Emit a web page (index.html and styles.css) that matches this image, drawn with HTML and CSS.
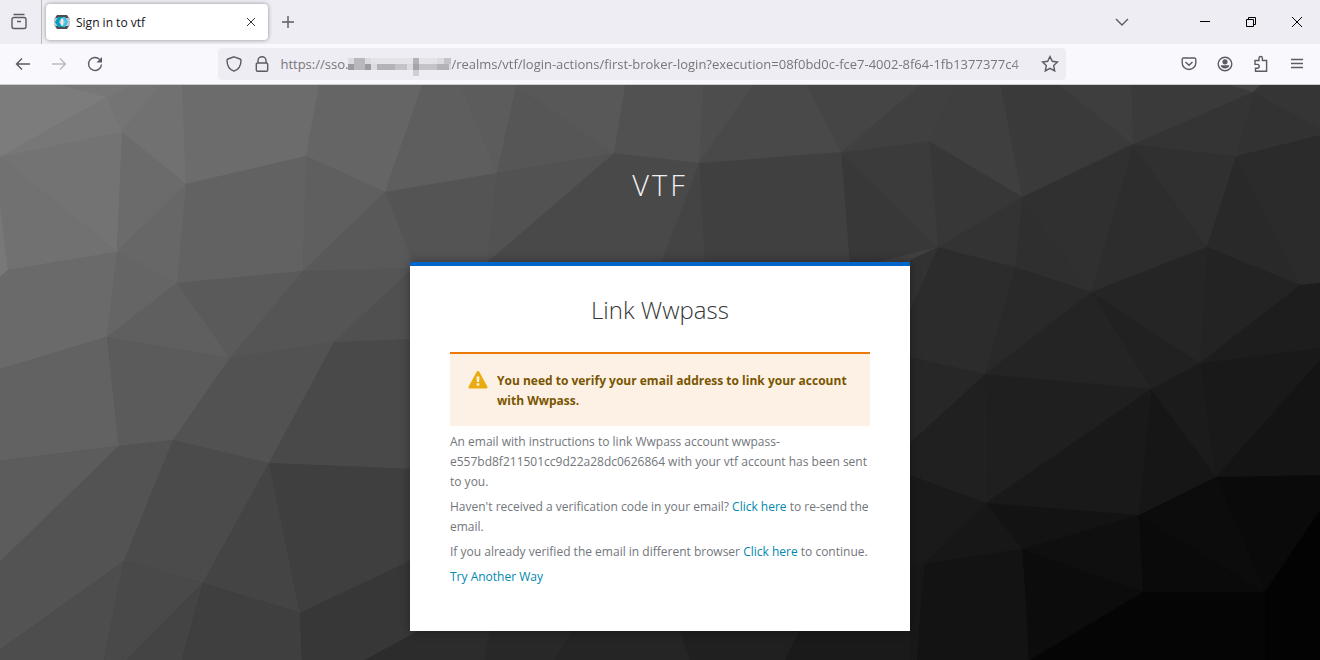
FILE: index.html
```html
<!DOCTYPE html>
<html lang="en">
  <head>
    <meta charset="UTF-8" />
    <meta name="viewport" content="width=device-width, initial-scale=1.0" />
    <link rel="stylesheet" href="styles.css">
    <title>Sign in to vtf</title>
  </head>
  <body>
    <!-- tab bar -->
    <div class="tab-bar">
      <button class="view-btn" aria-label="Recent browsing">
        <svg width="18" height="18" viewBox="0 0 18 18"><path d="M3.500 1.500h11M4 4.500h10a2 2 0 0 1 2 2v7a2 2 0 0 1-2 2H4a2 2 0 0 1-2-2v-7a2 2 0 0 1 2-2zM7 8.500h4" /></svg>
      </button>
      <div class="tab">
        <svg class="favicon" width="16" height="16" viewBox="0 0 16 16">
          <path d="M3 1h10l2 3v8l-2 3H3l-2-3V4z" fill="#4d4d4d" />
          <path d="M0 4h16v8H0z" fill="#c4c8cc" />
          <path d="M4 3h4L5 8l3 5H4L1 8z" fill="#00a0c6" />
          <path d="M8 3h3l3 5-3 5H8l3-5z" fill="#33c6e9" />
          <path d="M7 5h2v6H7z" fill="#e6eef0" />
        </svg>
        <span class="tab-title">Sign in to vtf</span>
        <button class="tab-close" aria-label="Close tab">
          <svg width="10" height="10" viewBox="0 0 10 10"><path d="M1 1l8 8M9 1L1 9" /></svg>
        </button>
      </div>
      <button class="new-tab" aria-label="New tab">
        <svg width="14" height="14" viewBox="0 0 14 14"><path d="M7 1v12M1 7h12" /></svg>
      </button>
      <div class="window-buttons">
        <button class="all-tabs" aria-label="List all tabs">
          <svg width="14" height="8" viewBox="0 0 14 8"><path d="M1 1l6 6 6-6" /></svg>
        </button>
        <button aria-label="Minimize">
          <svg width="10" height="10" viewBox="0 0 10 10"><path d="M0 4.500h10" /></svg>
        </button>
        <button aria-label="Restore">
          <svg width="10" height="10" viewBox="0 0 10 10"><path d="M.5 2.500h7v7h-7zM2.500 2.500v-2h7v7h-2" /></svg>
        </button>
        <button aria-label="Close">
          <svg width="10" height="10" viewBox="0 0 10 10"><path d="M0 0l10 10M10 0L0 10" /></svg>
        </button>
      </div>
    </div>

    <!-- navigation bar -->
    <div class="nav-bar">
      <button aria-label="Back">
        <svg width="16" height="16" viewBox="0 0 16 16"><path d="M15 8H2M7 2.500L1.500 8 7 13.500" /></svg>
      </button>
      <button aria-label="Forward" disabled>
        <svg width="16" height="16" viewBox="0 0 16 16"><path d="M1 8h13M9 2.500L14.500 8 9 13.500" /></svg>
      </button>
      <button aria-label="Reload">
        <svg width="16" height="16" viewBox="0 0 16 16"><path d="M14.500 8.500A6.500 6.500 0 1 1 12.800 3.600" /><path class="solid" d="M15 1v5.500H9.500z" /></svg>
      </button>
      <div class="spacer"></div>
      <div class="url-bar">
        <button aria-label="Tracking protection">
          <svg width="16" height="16" viewBox="0 0 16 16"><path d="M8 .8l6 2.200c.7.3 1 .7 1 1.400C15 9.500 12.500 13.500 8 15.200 3.500 13.500 1 9.500 1 4.400c0-.7.3-1.100 1-1.400z" /></svg>
        </button>
        <button aria-label="Site information">
          <svg width="14" height="16" viewBox="0 0 14 16"><path d="M3 7V4.500a4 3.800 0 0 1 8 0V7M2.500 7h9a1.200 1.200 0 0 1 1.200 1.200v5.800a1.200 1.200 0 0 1-1.200 1.200h-9A1.200 1.200 0 0 1 1.300 14V8.200A1.200 1.200 0 0 1 2.500 7z" /></svg>
        </button>
        <label class="url-host" for="url">https://sso.</label>
        <svg class="mosaic" width="103" height="18" viewBox="0 0 103 18">
          <path d="M0 0h103v12H0z" fill="#dcdbe0" />
          <path d="M0 6h6v6H0zM17 6h6v6h-6z" fill="#9c9b9f" />
          <path d="M6 0h5v6H6zM11 0h6v6h-6zM6 6h11v6H6z" fill="#b9b8bd" />
          <path d="M23 0h42v6H23zM71 0h18v6H71z" fill="#e4e3e8" />
          <path d="M29 6h18v6H29zM89 6h12v6H89zM65 0h6v6h-6z" fill="#b3b2b7" />
          <path d="M47 6h12v6H47zM71 6h18v6H71zM96 0h7v6h-7z" fill="#c4c3c8" />
          <path d="M65 6h6v6h-6z" fill="#a5a4a9" />
          <path d="M65 12h6v6h-6z" fill="#d0cfd4" />
        </svg>
        <input type="text" id="url" value="/realms/vtf/login-actions/first-broker-login?execution=08f0bd0c-fce7-4002-8f64-1fb1377377c4" />
        <button aria-label="Bookmark this page">
          <svg width="18" height="18" viewBox="0 0 18 18"><path d="M9 1.500l2.300 4.800 5.200.7-3.800 3.600 1 5.300L9 13.300l-4.700 2.600 1-5.300L1.500 7l5.200-.7z" /></svg>
        </button>
      </div>
      <div class="spacer"></div>
      <button aria-label="Save to Pocket">
        <svg width="16" height="16" viewBox="0 0 16 16"><path d="M2.500 2h11a1.300 1.300 0 0 1 1.300 1.300V7a6.800 6.500 0 0 1-13.600 0V3.300A1.300 1.300 0 0 1 2.500 2zM4.500 6L8 9.300 11.500 6" /></svg>
      </button>
      <button aria-label="Account">
        <svg width="16" height="16" viewBox="0 0 16 16"><circle cx="8" cy="8" r="6.800" /><circle class="solid" cx="8" cy="5.800" r="2.600" /><path class="solid" d="M3.600 9.300h8.800a4.500 4 0 0 1-8.800 0z" /></svg>
      </button>
      <button aria-label="Extensions">
        <svg width="16" height="18" viewBox="0 0 16 18"><path d="M2 5.500h4V3.200a1.700 1.700 0 0 1 3.400 0v2.300h4.200v10.700H2.500v-3h1.800a1.800 1.800 0 0 0 0-3.800H2z" /></svg>
      </button>
      <button aria-label="Open menu">
        <svg width="14" height="12" viewBox="0 0 14 12"><path d="M1 1.500h12M1 5.500h12M1 9.500h12" /></svg>
      </button>
    </div>

    <!-- page -->
    <div class="login-page">
      <svg class="backdrop" viewBox="0 85 1320 575" preserveAspectRatio="xMidYMid slice" aria-hidden="true">
        <defs>
          <linearGradient id="base" x1="0" y1="0" x2="1" y2="1">
            <stop offset="0" stop-color="#7c7c7c" />
            <stop offset="0.5" stop-color="#3f3f3f" />
            <stop offset="1" stop-color="#000" />
          </linearGradient>
        </defs>
        <path d="M0 85H1320V660H0z" fill="url(#base)" />
        <!-- left side -->
        <path d="M0 85H60L107 97 0 157z" fill="#7c7c7c" />
        <path d="M60 85H135L107 97z" fill="#777" />
        <path d="M107 97L122 132 0 157z" fill="#777" />
        <path d="M135 85H160L122 132 107 97z" fill="#747474" />
        <path d="M160 85H182L186 184 122 132z" fill="#717171" />
        <path d="M0 157L122 132 117 252z" fill="#737373" />
        <path d="M0 157L117 252 8 270 0 205z" fill="#717171" />
        <path d="M0 205L8 270 0 277z" fill="#787878" />
        <path d="M122 132L186 184 117 252z" fill="#6b6b6b" />
        <path d="M182 85H319L306 156 186 184z" fill="#6c6c6c" />
        <path d="M319 85H422L385 192 306 156z" fill="#656565" />
        <path d="M186 184L306 156 303 271 177 283z" fill="#626262" />
        <path d="M306 156L385 192 303 271z" fill="#5f5f5f" />
        <path d="M117 252L186 184 177 283z" fill="#676767" />
        <path d="M117 252L177 283 107 337z" fill="#656565" />
        <path d="M8 270L117 252 107 337 0 369V277z" fill="#6a6a6a" />
        <path d="M107 337L177 283 230 358z" fill="#5f5f5f" />
        <path d="M177 283L303 271 230 358z" fill="#5a5a5a" />
        <path d="M385 192L413 268 303 271z" fill="#595959" />
        <path d="M303 271L413 268 334 342 230 358z" fill="#555" />
        <path d="M413 268V339L334 342z" fill="#505050" />
        <path d="M0 369L107 337 119 446 0 461z" fill="#626262" />
        <path d="M107 337L230 358 173 440 119 446z" fill="#5b5b5b" />
        <path d="M230 358L334 342 269 463 173 440z" fill="#525252" />
        <path d="M334 342L413 339V469L269 463z" fill="#494949" />
        <path d="M0 461L119 446 0 562z" fill="#5c5c5c" />
        <path d="M119 446L173 440 124 561 0 650V562z" fill="#535353" />
        <path d="M173 440L269 463 203 583 124 561z" fill="#4b4b4b" />
        <path d="M0 650L124 561 104 660H0z" fill="#4d4d4d" />
        <path d="M124 561L203 583 127 660H104z" fill="#494949" />
        <path d="M203 583L182 660H127z" fill="#444" />
        <path d="M269 463L300 613 203 583z" fill="#444" />
        <path d="M269 463L413 469V560L300 613z" fill="#3f3f3f" />
        <path d="M203 583L300 613 302 660H182z" fill="#3f3f3f" />
        <path d="M300 613L420 556V630L365 660H302z" fill="#373737" />
        <path d="M365 660L420 630H490L485 660z" fill="#2c2c2c" />
        <path d="M490 630H573L555 660H485z" fill="#282828" />
        <path d="M573 630H680L690 660H555z" fill="#252525" />
        <path d="M680 630H800L785 660H690z" fill="#202020" />
        <path d="M800 630H920L917 660H785z" fill="#1a1a1a" />
        <!-- behind the header -->
        <path d="M422 85H460L497 173 385 192z" fill="#5e5e5e" />
        <path d="M460 85H516L497 173z" fill="#5c5c5c" />
        <path d="M516 85L614 153 497 173z" fill="#565656" />
        <path d="M516 85H625L614 153z" fill="#585858" />
        <path d="M385 192L497 173 490 262H413z" fill="#545454" />
        <path d="M497 173L614 153 487 262z" fill="#525252" />
        <path d="M625 85H703L699 163 614 153z" fill="#515151" />
        <path d="M614 153L699 163 660 266H483z" fill="#494949" />
        <path d="M703 85H752L699 163z" fill="#4d4d4d" />
        <path d="M752 85H806L841 152 699 163z" fill="#494949" />
        <path d="M806 85H920L841 152z" fill="#454545" />
        <path d="M699 163L705 266H660z" fill="#444" />
        <path d="M699 163L841 152 850 266H705z" fill="#404040" />
        <!-- right side -->
        <path d="M920 85H952L929 141 841 152z" fill="#404040" />
        <path d="M841 152L929 141 938 247z" fill="#3b3b3b" />
        <path d="M841 152L938 247 860 266H850z" fill="#383838" />
        <path d="M952 85H1000L1022 197 929 141z" fill="#3f3f3f" />
        <path d="M929 141L1022 197 938 247z" fill="#373737" />
        <path d="M1000 85H1060L1133 144 1022 197z" fill="#3a3a3a" />
        <path d="M1060 85H1131L1133 144z" fill="#3e3e3e" />
        <path d="M1131 85H1230L1253 92 1133 144z" fill="#3a3a3a" />
        <path d="M1230 85H1260L1253 92z" fill="#444" />
        <path d="M1260 85H1320V128L1253 92z" fill="#353535" />
        <path d="M1133 144L1253 92 1236 156z" fill="#343434" />
        <path d="M1253 92L1320 128V135L1236 156z" fill="#323232" />
        <path d="M1133 144L1236 156 1207 247z" fill="#303030" />
        <path d="M1022 197L1133 144 1091 292z" fill="#303030" />
        <path d="M1133 144L1207 247 1091 292z" fill="#2d2d2d" />
        <path d="M1022 197L1015 267 938 247z" fill="#333" />
        <path d="M1022 197L1091 292 1015 267z" fill="#2f2f2f" />
        <path d="M1236 156L1300 285 1207 247z" fill="#292929" />
        <path d="M1236 156L1320 135V283L1300 285z" fill="#2b2b2b" />
        <path d="M938 247L910 310V260z" fill="#323232" />
        <path d="M938 247L1015 267 985 374 910 357V310z" fill="#2c2c2c" />
        <path d="M1015 267L1091 292 985 374z" fill="#292929" />
        <path d="M1091 292L1207 247 1200 363z" fill="#252525" />
        <path d="M1207 247L1300 285 1200 363z" fill="#232323" />
        <path d="M1091 292L1151 389 985 374z" fill="#242424" />
        <path d="M1091 292L1200 363 1151 389z" fill="#212121" />
        <path d="M1300 285L1320 283V348L1200 363z" fill="#1d1d1d" />
        <path d="M910 357L985 374 910 443z" fill="#272727" />
        <path d="M985 374V503L910 475V443z" fill="#202020" />
        <path d="M985 374L1151 389 986 503z" fill="#1f1f1f" />
        <path d="M1151 389L1200 363 1216 477z" fill="#1b1b1b" />
        <path d="M1200 363L1320 348V360L1216 477z" fill="#191919" />
        <path d="M1320 360V475L1216 477z" fill="#141414" />
        <path d="M1151 389L1139 515 986 503z" fill="#191919" />
        <path d="M1151 389L1216 477 1139 515z" fill="#161616" />
        <path d="M910 475L986 503 924 564 910 566z" fill="#1a1a1a" />
        <path d="M986 503L1022 549 924 564z" fill="#171717" />
        <path d="M986 503L1139 515 1022 549z" fill="#131313" />
        <path d="M910 566L924 564 917 660H910z" fill="#181818" />
        <path d="M924 564L1022 549 1028 660H917z" fill="#131313" />
        <path d="M1022 549L1139 515 1143 592z" fill="#0f0f0f" />
        <path d="M1022 549L1143 592 1030 660z" fill="#0c0c0c" />
        <path d="M1139 515L1265 592H1143z" fill="#0a0a0a" />
        <path d="M1139 515L1216 477 1265 592z" fill="#0c0c0c" />
        <path d="M1216 477L1320 475V510L1265 592z" fill="#0a0a0a" />
        <path d="M1320 510V660H1265V592z" fill="#030303" />
        <path d="M1143 592H1265V660H1030z" fill="#050505" />
      </svg>

      <div class="realm">VTF</div>
      <div class="card">
        <h1>Link Wwpass</h1>
        <div class="alert">
          <svg width="20" height="18" viewBox="0 0 20 18">
            <path d="M10 0c.6 0 1 .3 1.300.8l8 14.600c.5 1-.1 2.100-1.300 2.100H2C.8 17.500.2 16.400.7 15.400l8-14.600C9 .3 9.400 0 10 0z" fill="#ebab0e" />
            <path d="M8.500 5.500h3l-.4 5.500H8.900zM8.700 12.300h2.600v2.400H8.700z" fill="#fdf0e5" />
          </svg>
          <span>You need to verify your email address to link your account with Wwpass.</span>
        </div>
        <p>An email with instructions to link Wwpass account wwpass-e557bd8f211501cc9d22a28dc0626864 with your vtf account has been sent to you.</p>
        <p>Haven't received a verification code in your email? <a href="#">Click here</a> to re-send the email.</p>
        <p>If you already verified the email in different browser <a href="#">Click here</a> to continue.</p>
        <p><a href="#">Try Another Way</a></p>
      </div>
    </div>
  </body>
</html>
```
FILE: styles.css
```css
* {
  box-sizing: border-box;
}

body {
  margin: 0;
  min-height: 100vh;
  display: flex;
  flex-direction: column;
  font-family: "Open Sans", "Noto Sans", sans-serif;
  font-size: 12px;
}

button {
  display: flex;
  justify-content: center;
  align-items: center;
  flex: none;
  padding: 0;
  border: none;
  background: none;
  color: #5b5b66;
}

button svg {
  fill: none;
  stroke: currentColor;
  stroke-width: 1.4;
}

button .solid {
  fill: currentColor;
  stroke: none;
}

/* tab bar */
.tab-bar {
  display: flex;
  align-items: center;
  height: 44px;
  background-color: #eeedf3;
}

.view-btn {
  width: 42px;
  height: 44px;
  padding-right: 4px;
  border-right: 1px solid #b9b9c0;
}

.tab {
  display: flex;
  align-items: center;
  gap: 6px;
  width: 222px;
  height: 36px;
  margin-left: 4px;
  padding: 0 7px 0 8px;
  border-radius: 4px;
  background-color: #fff;
  box-shadow: 0 0 4px rgba(0, 0, 0, 0.4);
}

.tab-title {
  flex: 1;
  color: #15141a;
}

.tab-close {
  width: 20px;
  height: 20px;
  color: #333;
}

.tab-close svg {
  stroke-width: 1;
}

.new-tab {
  width: 40px;
  height: 36px;
}

.window-buttons {
  display: flex;
  margin-left: auto;
}

.window-buttons button {
  width: 46px;
  height: 44px;
  color: #000;
}

.window-buttons svg {
  stroke-width: 1;
}

.window-buttons .all-tabs {
  width: 36px;
  margin-right: 42px;
  color: #5b5b66;
}

.all-tabs svg {
  stroke-width: 1.4;
}

/* navigation bar */
.nav-bar {
  display: flex;
  align-items: center;
  height: 41px;
  padding: 0 5px;
  border-bottom: 1px solid #ccc;
  background-color: #f9f8fd;
}

.nav-bar > button {
  width: 36px;
  height: 32px;
}

button:disabled {
  color: #bcbbc2;
}

.spacer {
  flex: 1;
}

.url-bar {
  flex: 8;
  display: flex;
  align-items: center;
  min-width: 0;
  height: 32px;
  padding: 0 2px;
  border-radius: 4px;
  background-color: #eeedf3;
  color: #77767c;
  font-size: 13px;
}

.url-bar button {
  width: 28px;
  height: 28px;
}

.url-host {
  margin-left: 4px;
}

.mosaic {
  flex: none;
  margin-top: 6px;
}

.url-bar input {
  flex: 1;
  min-width: 0;
  padding: 0;
  border: none;
  outline: none;
  background: none;
  color: inherit;
  font: inherit;
  -webkit-mask-image: linear-gradient(to left, transparent, #000 24px);
  mask-image: linear-gradient(to left, transparent, #000 24px);
}

/* login page */
.login-page {
  position: relative;
  flex: 1;
  overflow: hidden;
  padding: 82px 20px 29px;
  background-color: #333;
}

.backdrop {
  position: absolute;
  top: 0;
  left: 0;
  width: 100%;
  height: 100%;
}

.realm {
  position: relative;
  margin-bottom: 59px;
  color: #f0f0f4;
  font-size: 29px;
  font-weight: 300;
  line-height: 36px;
  letter-spacing: 3px;
  text-align: center;
}

.card {
  position: relative;
  max-width: 500px;
  margin: 0 auto;
  padding: 28px 40px 44px;
  border-top: 4px solid #06c;
  background-color: #fff;
  box-shadow: 0 0 10px rgba(0, 0, 0, 0.35);
  color: #72767b;
  line-height: 20px;
}

h1 {
  margin: 0 0 26px;
  color: #363636;
  font-size: 24px;
  font-weight: 300;
  line-height: 32px;
  text-align: center;
}

.alert {
  display: flex;
  gap: 9px;
  margin-bottom: 6px;
  padding: 17px 18px 15px;
  border-top: 2px solid #ec7a08;
  background-color: #fdf0e5;
  color: #795600;
  font-weight: bold;
}

.alert svg {
  flex: none;
}

p {
  margin: 0 0 5px;
}

p:last-child {
  margin-bottom: 0;
}

a {
  color: #0088ad;
  text-decoration: none;
}
```
